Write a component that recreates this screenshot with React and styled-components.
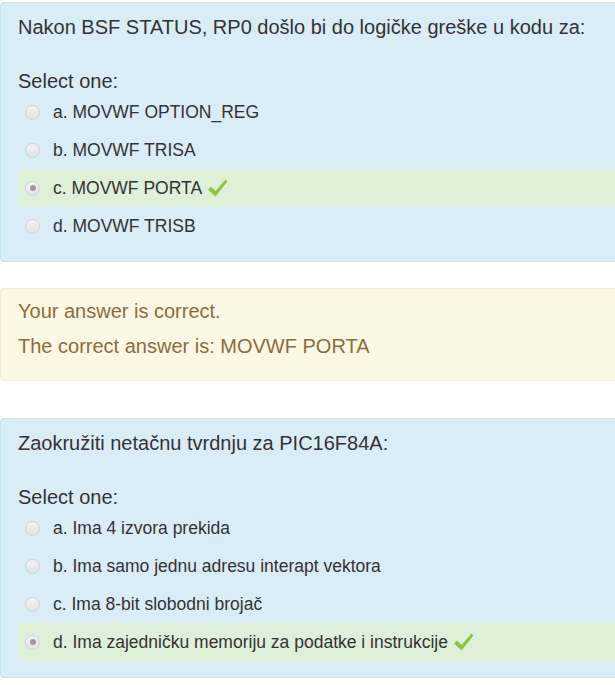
import React from "react";
import styled, { createGlobalStyle } from "styled-components";

const GlobalStyle = createGlobalStyle`
  html, body {
    margin: 0;
    padding: 0;
    background: #fff;
    overflow: hidden;
  }
  body {
    font-family: "Liberation Sans", Arial, sans-serif;
    color: #333;
  }
`;

const Page = styled.div`
  width: 615px;
  overflow: hidden;
  padding-top: 2px;
`;

const Formulation = styled.div`
  margin-right: -12px;
  margin-bottom: ${({ gap }) => gap || 0}px;
  padding: 10px 0 16px 17px;
  background: #d9edf7;
  border: 1px solid #bce8f1;
  border-radius: 4px;
`;

const Question = styled.p`
  margin: 0;
  font-size: 20px;
  line-height: 28px;
`;

const Prompt = styled.p`
  margin: 28px 0 0;
  font-size: 20px;
  line-height: 24px;
`;

const Answers = styled.div`
  display: flex;
  flex-direction: column;
`;

const Row = styled.div`
  display: flex;
  align-items: center;
  height: 38px;
  padding-left: 7px;
  font-size: 17.5px;
  background: ${({ correct }) => (correct ? "#dff0d8" : "transparent")};
`;

const Radio = styled.span`
  position: relative;
  box-sizing: border-box;
  width: 15px;
  height: 15px;
  margin-right: 13px;
  flex-shrink: 0;
  border-radius: 50%;
  border: 1px solid #cfd3d6;
  background: linear-gradient(#f3f4f5, #e0e3e6);

  &::after {
    content: "";
    display: ${({ checked }) => (checked ? "block" : "none")};
    position: absolute;
    left: 3.5px;
    top: 3.5px;
    width: 6px;
    height: 6px;
    border-radius: 50%;
    background: #9a9a9a;
  }
`;

const Check = styled.svg`
  margin-left: 5px;
  width: 21px;
  height: 20px;
`;

const Feedback = styled.div`
  margin-right: -12px;
  margin-bottom: 37px;
  padding: 8px 0 20px 17px;
  background: #fcf8e3;
  border: 1px solid #faebcc;
  border-radius: 4px;
  color: #8a6d3b;
  font-size: 20px;
`;

const FeedbackLine = styled.p`
  margin: ${({ first }) => (first ? "0" : "7px 0 0")};
  line-height: 28px;
`;

const Tick = () => (
  <Check viewBox="0 0 21 20">
    <path
      d="M1 11.5 L4 8.5 L8.5 13 L18.5 1.5 L20.5 3.5 L8.5 18.5 Z"
      fill="#8cc63f"
    />
  </Check>
);

function QuestionBox({ text, options, chosen, gap }) {
  return (
    <Formulation gap={gap}>
      <Question>{text}</Question>
      <Prompt>Select one:</Prompt>
      <Answers>
        {options.map((opt, i) => (
          <Row key={opt} correct={i === chosen}>
            <Radio checked={i === chosen} />
            {String.fromCharCode(97 + i)}. {opt}
            {i === chosen && <Tick />}
          </Row>
        ))}
      </Answers>
    </Formulation>
  );
}

export default function App() {
  return (
    <Page>
      <GlobalStyle />
      <QuestionBox
        gap={26}
        text="Nakon BSF STATUS, RP0 došlo bi do logičke greške u kodu za:"
        options={["MOVWF OPTION_REG", "MOVWF TRISA", "MOVWF PORTA", "MOVWF TRISB"]}
        chosen={2}
      />
      <Feedback>
        <FeedbackLine first>Your answer is correct.</FeedbackLine>
        <FeedbackLine>The correct answer is: MOVWF PORTA</FeedbackLine>
      </Feedback>
      <QuestionBox
        text="Zaokružiti netačnu tvrdnju za PIC16F84A:"
        options={[
          "Ima 4 izvora prekida",
          "Ima samo jednu adresu interapt vektora",
          "Ima 8-bit slobodni brojač",
          "Ima zajedničku memoriju za podatke i instrukcije",
        ]}
        chosen={3}
      />
    </Page>
  );
}
